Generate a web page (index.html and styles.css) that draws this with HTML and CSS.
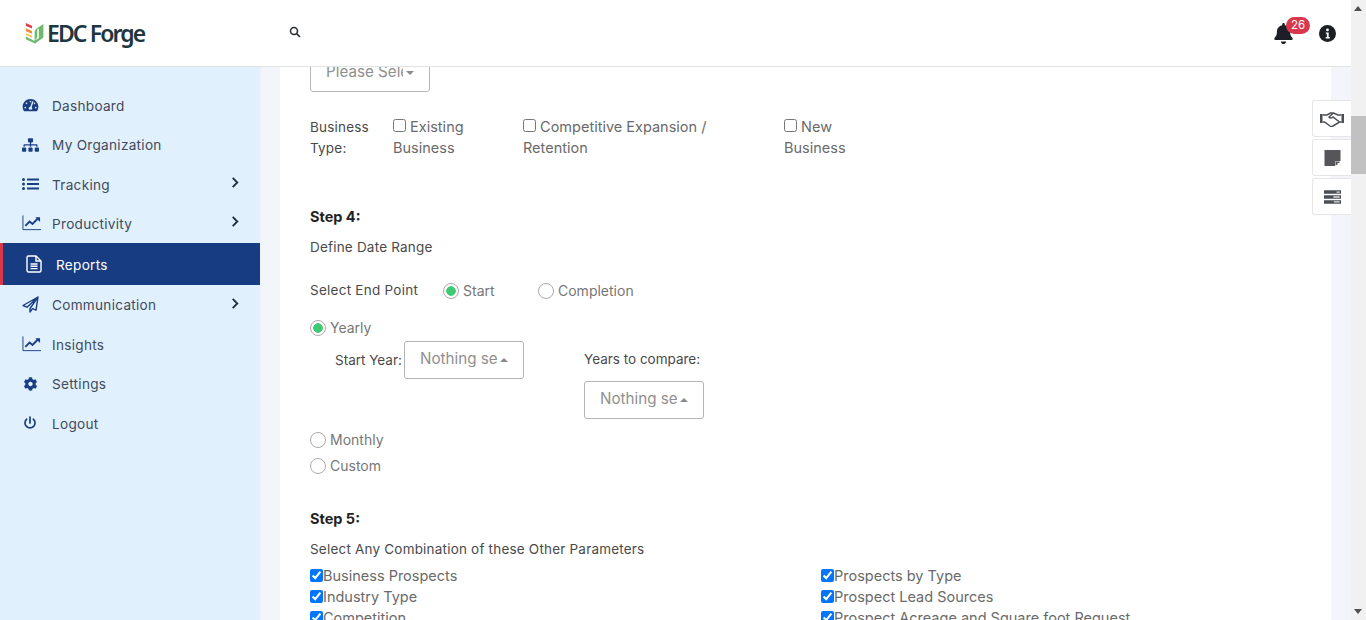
FILE: index.html
```html
<!DOCTYPE html>
<html lang="en">
<head>
<meta charset="utf-8">
<title>EDC Forge</title>
<link rel="stylesheet" href="styles.css">
</head>
<body>
<div class="app">
  <div class="page">
    <header class="topbar">
      <a class="logo">
        <svg class="logo-mark" viewBox="0 0 24 26"><path fill="#d9434e" d="M1 1l7 3v3.400L1 4.400z"/><path fill="#ef8a3c" d="M1 7l7 3v3.400l-7-3z"/><path fill="#f4c23f" d="M1 12.600l7 3v2.200l-7-3z"/><path fill="#6cb86d" d="M1 16.500l10 5V14c0-3 0-5 2-6.500L21 2v15.500l-9.500 7L1 19.500z"/><path fill="#fff" d="M14 8.500l1.800-1.200V18l-3 2.200-1.300-.7c1.600-.6 2.500-1.600 2.500-3.500z"/></svg>
        <span class="logo-text">EDC Forge</span>
      </a>
      <svg class="search-icon" viewBox="0 0 12 12"><circle cx="5" cy="5" r="3.500"/><path d="M7.600 7.600L11 11"/></svg>
      <div class="top-actions">
        <span class="bell">
          <svg class="bell-icon" viewBox="0 0 448 512"><path d="M224 512c35.320 0 63.970-28.650 63.970-64H160.030c0 35.350 28.650 64 63.970 64zm215.390-149.710c-19.320-20.760-55.470-51.990-55.470-154.290 0-77.700-54.480-139.900-127.940-155.160V32c0-17.670-14.320-32-31.980-32s-31.980 14.330-31.980 32v20.840C118.560 68.100 64.080 130.300 64.080 208c0 102.300-36.150 133.530-55.470 154.290-6 6.450-8.660 14.160-8.610 21.710.11 16.400 12.980 32 32.100 32h383.800c19.120 0 32-15.600 32.100-32 .05-7.550-2.610-15.270-8.610-21.710z"/></svg>
          <span class="badge">26</span>
        </span>
        <svg class="info-icon" viewBox="0 0 16 16"><circle cx="8" cy="8" r="8" fill="#1c2026"/><circle cx="8" cy="4.600" r="1.300" fill="#fff"/><path fill="#fff" d="M6.400 7h2.700v4.400h1V12.600H6.300V11.400h1.100V8.200h-1z"/></svg>
      </div>
    </header>

    <div class="workspace">
      <nav class="sidebar">
        <a class="nav-item">
          <svg class="nav-icon" viewBox="0 0 576 512"><path d="M288 32C128.940 32 0 160.940 0 320c0 52.800 14.250 102.260 39.060 144.800 5.610 9.620 16.300 15.200 27.440 15.200h443c11.140 0 21.830-5.580 27.440-15.200C561.750 422.260 576 372.800 576 320c0-159.060-128.940-288-288-288zm0 64c14.710 0 26.580 10.130 30.320 23.650-1.110 2.260-2.640 4.230-3.450 6.670l-9.220 27.670c-5.130 3.490-10.970 6.010-17.640 6.010-17.670 0-32-14.330-32-32S270.330 96 288 96zM96 384c-17.670 0-32-14.330-32-32s14.330-32 32-32 32 14.330 32 32-14.330 32-32 32zm48-160c-17.670 0-32-14.330-32-32s14.330-32 32-32 32 14.330 32 32-14.330 32-32 32zm246.770-72.410l-61.330 184C343.130 347.330 352 364.540 352 384c0 11.720-3.380 22.550-8.880 32H232.880c-5.500-9.450-8.880-20.280-8.880-32 0-33.940 26.500-61.430 59.900-63.590l61.340-184.010c4.170-12.560 17.730-19.450 30.360-15.170 12.570 4.190 19.350 17.790 15.170 30.360zm14.660 57.200l15.520-46.550c3.470-1.290 7.130-2.230 11.050-2.230 17.670 0 32 14.330 32 32s-14.330 32-32 32c-11.380-.01-20.890-6.280-26.570-15.220zM480 384c-17.670 0-32-14.330-32-32s14.330-32 32-32 32 14.330 32 32-14.330 32-32 32z"/></svg>
          <span>Dashboard</span>
        </a>
        <a class="nav-item">
          <svg class="nav-icon" viewBox="0 0 640 512"><path d="M128 352H32c-17.670 0-32 14.330-32 32v96c0 17.670 14.330 32 32 32h96c17.670 0 32-14.330 32-32v-96c0-17.670-14.330-32-32-32zm-24-80h192v48h48v-48h192v48h48v-57.590c0-21.170-17.230-38.410-38.410-38.410H344v-64h40c17.670 0 32-14.330 32-32V32c0-17.670-14.330-32-32-32H256c-17.670 0-32 14.330-32 32v96c0 17.670 14.330 32 32 32h40v64H94.410C73.230 224 56 241.230 56 262.410V320h48v-48zm264 80h-96c-17.670 0-32 14.330-32 32v96c0 17.670 14.330 32 32 32h96c17.670 0 32-14.330 32-32v-96c0-17.670-14.330-32-32-32zm240 0h-96c-17.670 0-32 14.330-32 32v96c0 17.670 14.330 32 32 32h96c17.670 0 32-14.330 32-32v-96c0-17.670-14.330-32-32-32z"/></svg>
          <span>My Organization</span>
        </a>
        <a class="nav-item">
          <svg class="nav-icon" viewBox="0 0 17 13"><circle cx="1.500" cy="2" r="1.500"/><circle cx="1.500" cy="6.500" r="1.500"/><circle cx="1.500" cy="11" r="1.500"/><path d="M5 1h12v2H5zM5 5.500h12v2H5zM5 10h12v2H5z"/></svg>
          <span>Tracking</span>
          <svg class="chevron" viewBox="0 0 8 12"><path d="M1.500 1l5 5-5 5"/></svg>
        </a>
        <a class="nav-item">
          <svg class="nav-icon line-icon" viewBox="0 0 20 16"><path d="M1 0v15h19"/><path class="thick" d="M3.500 11l4.500-4.500 3 2.500 6-6"/><path class="solid" d="M14 2h5v5z"/></svg>
          <span>Productivity</span>
          <svg class="chevron" viewBox="0 0 8 12"><path d="M1.500 1l5 5-5 5"/></svg>
        </a>
        <a class="nav-item active">
          <svg class="nav-icon file-icon" viewBox="0 0 16 18"><path d="M1 2.500A1.500 1.500 0 0 1 2.500 1H10l5 5v9.500a1.500 1.500 0 0 1-1.500 1.500h-11A1.500 1.500 0 0 1 1 15.500z"/><path d="M10 1v5h5M4.500 9h7M4.500 11.300h7M4.500 13.600h7"/></svg>
          <span>Reports</span>
        </a>
        <a class="nav-item">
          <svg class="nav-icon plane-icon" viewBox="0 0 17 17"><path d="M16 1L1 9.500l4 1.700L16 1l-8 11.500V16l2.500-3.300 3.500 1.500z"/></svg>
          <span>Communication</span>
          <svg class="chevron" viewBox="0 0 8 12"><path d="M1.500 1l5 5-5 5"/></svg>
        </a>
        <a class="nav-item">
          <svg class="nav-icon line-icon" viewBox="0 0 20 16"><path d="M1 0v15h19"/><path class="thick" d="M3.500 11l4.500-4.500 3 2.500 6-6"/><path class="solid" d="M14 2h5v5z"/></svg>
          <span>Insights</span>
        </a>
        <a class="nav-item">
          <svg class="nav-icon" viewBox="0 0 512 512"><path d="M487.400 315.700l-42.600-24.600c4.300-23.200 4.300-47 0-70.200l42.600-24.600c4.900-2.800 7.100-8.600 5.500-14-11.100-35.600-30-67.800-54.700-94.600-3.800-4.100-10-5.100-14.800-2.300L380.800 110c-17.900-15.400-38.500-27.300-60.800-35.100V25.800c0-5.600-3.900-10.500-9.400-11.700-36.700-8.200-74.300-7.800-109.200 0-5.500 1.200-9.400 6.100-9.400 11.700V75c-22.200 7.900-42.800 19.800-60.800 35.100L88.700 85.500c-4.900-2.800-11-1.900-14.800 2.300-24.700 26.700-43.600 58.900-54.700 94.600-1.700 5.400.6 11.200 5.500 14L67.300 221c-4.300 23.200-4.300 47 0 70.200l-42.600 24.600c-4.900 2.800-7.100 8.600-5.500 14 11.100 35.600 30 67.800 54.700 94.600 3.800 4.100 10 5.100 14.800 2.300l42.600-24.600c17.900 15.400 38.500 27.300 60.800 35.100v49.200c0 5.600 3.900 10.500 9.400 11.700 36.700 8.200 74.300 7.800 109.200 0 5.500-1.200 9.400-6.100 9.400-11.700v-49.200c22.200-7.900 42.800-19.800 60.800-35.100l42.600 24.600c4.900 2.800 11 1.900 14.800-2.300 24.700-26.700 43.600-58.900 54.700-94.600 1.500-5.500-.7-11.300-5.600-14.100zM256 336c-44.100 0-80-35.900-80-80s35.900-80 80-80 80 35.900 80 80-35.900 80-80 80z"/></svg>
          <span>Settings</span>
        </a>
        <a class="nav-item">
          <svg class="nav-icon power-icon" viewBox="0 0 14 14"><path d="M7 1v6M3.700 3.200a5 5 0 1 0 6.600 0"/></svg>
          <span>Logout</span>
        </a>
      </nav>

      <main class="panel">
        <div class="panel-inner">
          <button class="picker picker-top"><span class="picker-text">Please Select</span><i class="caret"></i></button>

          <div class="business-row">
            <div class="business-label">Business Type:</div>
            <label class="business-col col-a"><input type="checkbox"> Existing Business</label>
            <label class="business-col col-b"><input type="checkbox"> Competitive Expansion / Retention</label>
            <label class="business-col col-c"><input type="checkbox"> New Business</label>
          </div>

          <h3 class="step step-four">Step 4:</h3>
          <p class="lead lead-four">Define Date Range</p>

          <div class="endpoint-row">
            <span class="endpoint-label">Select End Point</span>
            <label class="radio-line endpoint-start"><input class="radio" type="radio" name="end" checked> Start</label>
            <label class="radio-line endpoint-finish"><input class="radio" type="radio" name="end"> Completion</label>
          </div>

          <label class="radio-line period period-yearly"><input class="radio" type="radio" name="period" checked> Yearly</label>
          <div class="year-row">
            <div class="start-year">
              <span class="year-label">Start Year:</span>
              <button class="picker"><span class="picker-text">Nothing selected</span><i class="caret up"></i></button>
            </div>
            <div class="compare-year">
              <span class="year-label">Years to compare:</span>
              <button class="picker"><span class="picker-text">Nothing selected</span><i class="caret up"></i></button>
            </div>
          </div>
          <label class="radio-line period period-monthly"><input class="radio" type="radio" name="period"> Monthly</label>
          <label class="radio-line period period-custom"><input class="radio" type="radio" name="period"> Custom</label>

          <h3 class="step step-five">Step 5:</h3>
          <p class="lead lead-five">Select Any Combination of these Other Parameters</p>

          <div class="param-grid">
            <label class="param"><input type="checkbox" checked>Business Prospects</label>
            <label class="param"><input type="checkbox" checked>Prospects by Type</label>
            <label class="param"><input type="checkbox" checked>Industry Type</label>
            <label class="param"><input type="checkbox" checked>Prospect Lead Sources</label>
            <label class="param"><input type="checkbox" checked>Competition</label>
            <label class="param"><input type="checkbox" checked>Prospect Acreage and Square foot Request</label>
          </div>
        </div>
      </main>
      <div class="gutter"></div>
    </div>

    <aside class="dock">
      <a class="dock-btn">
        <svg class="dock-icon shake" viewBox="0 0 24 16"><path class="solid" d="M0 3h2.500v9H0zM21.500 3H24v9h-2.500z"/><path d="M2.500 4H7l3.500-2h3L18 4h3.500M21.500 11h-2L13 15q-1.500 1-3 0l-5.500-4h-2M13.500 2L9 6q1.500 2 4 0l6.500 5"/></svg>
      </a>
      <a class="dock-btn">
        <svg class="dock-icon" viewBox="0 0 16 16"><path fill="#55555a" d="M0 0h16v10.500L10.500 16H0z"/><path fill="#fff" d="M11 11h5v5h-5z"/><path fill="#55555a" d="M11.500 11.500H15V13h-2v2h-1.500z"/></svg>
      </a>
      <a class="dock-btn">
        <svg class="dock-icon" viewBox="0 0 19 15"><path fill="#4a4f55" d="M0 0h19v4H0zM0 5.500h19v4H0zM0 11h19v4H0z"/><path fill="#dfe1e3" d="M14 1.300h3.500v1.400H14zM10.500 6.800h7v1.400h-7zM11 12.300h6.500v1.400H11z"/></svg>
      </a>
    </aside>
  </div>

  <div class="scrollbar">
    <i class="scroll-arrow"></i>
    <div class="scroll-track"><div class="scroll-thumb"></div></div>
    <i class="scroll-arrow down"></i>
  </div>
</div>
</body>
</html>
```
FILE: styles.css
```css
* { box-sizing: border-box; }
html, body { margin: 0; height: 620px; overflow: hidden; }
body { font-family: "Inter", "Liberation Sans", sans-serif; font-size: 13.5px; color: #4a4a4a; background: #fff; }
svg { display: block; flex: none; }

.app { display: flex; width: 1366px; height: 620px; }
.page { position: relative; flex: 1; display: flex; flex-direction: column; min-width: 0; }

.topbar { height: 67px; flex: none; display: flex; align-items: center; background: #fff; border-bottom: 1px solid #dfe3e6; padding: 0 15px 0 25px; position: relative; z-index: 2; }
.logo { display: flex; align-items: center; gap: 1px; width: 264px; }
.logo-mark { width: 21px; height: 25px; }
.logo-text { font-family: "Noto Sans", "Liberation Sans", sans-serif; font-weight: 600; font-size: 23px; letter-spacing: -1.9px; color: #20363f; line-height: 1; }
.search-icon { width: 12px; height: 12px; fill: none; stroke: #2b2f36; stroke-width: 1.600; margin-top: -2px; }
.top-actions { margin-left: auto; display: flex; align-items: center; gap: 26px; }
.bell { position: relative; display: block; }
.bell-icon { width: 19px; height: 21px; fill: #1c2026; }
.badge { position: absolute; left: 12px; top: -6px; width: 24px; height: 17px; border-radius: 9px; background: #d9374b; color: #fff; font-size: 11.500px; line-height: 17px; text-align: center; }
.info-icon { width: 17px; height: 17px; }

.workspace { flex: 1; display: flex; min-height: 0; background: #f3f5fa; }
.sidebar { width: 262px; flex: none; background: #e1f0fd; padding-top: 18.600px; margin-right: 18px; border-right: 2px solid #ebf3fc; }
.nav-item { display: flex; align-items: center; height: 39.400px; padding: 0 21px 0 22px; color: #3f4b5c; font-size: 13.600px; letter-spacing: 0.28px; }
.nav-item span { margin-top: 1px; }
.nav-icon { width: 17px; height: 14px; fill: #1a3e82; margin-right: 13px; }
.chevron { width: 8px; height: 11px; margin-left: auto; margin-top: -3px; fill: none; stroke: #1f2d3d; stroke-width: 2; }
.line-icon { width: 19px; height: 16px; margin-right: 11px; fill: none; stroke: #1a3e82; stroke-width: 1; }
.line-icon .thick { stroke-width: 2; }
.line-icon .solid { fill: #1a3e82; stroke: none; }
.plane-icon { width: 17px; height: 17px; fill: none; stroke: #1a3e82; stroke-width: 1.400; stroke-linejoin: round; }
.power-icon { width: 14px; height: 14px; margin: 0 15px 0 1px; fill: none; stroke: #1a3e82; stroke-width: 1.700; stroke-linecap: round; }
.active { height: 42px; background: #173c82; color: #fff; border-left: 3px solid #d9374b; padding-left: 23px; }
.file-icon { width: 16px; height: 18px; margin-right: 14px; fill: none; stroke: #fff; stroke-width: 1.400; }

.panel { width: 1051px; flex: none; background: #fff; overflow: hidden; padding: 0 30px; }
.panel-inner { margin-top: -13px; }
.gutter { flex: 1; }

.picker { display: flex; align-items: center; width: 120px; height: 38px; padding: 0 10px 0 15px; background: #fff; border: 1px solid #b5b5b5; border-radius: 3px; font: inherit; font-size: 15.200px; color: #8f8f8f; margin: 0; }
.picker-text { flex: 1; overflow: hidden; white-space: nowrap; text-align: left; margin-top: -4px; }
.caret { width: 0; height: 0; margin: 0 5px 0 3px; border-left: 4px solid transparent; border-right: 4px solid transparent; border-top: 4px solid #8a8a8a; }
.caret.up { border-top: 0; border-bottom: 4px solid #8a8a8a; }

.business-row { display: flex; margin-top: 24px; line-height: 21px; color: #6a6a6a; font-size: 14.500px; }
.business-label { width: 83px; padding: 1px 20px 0 0; color: #4a4a4a; font-size: 13.500px; letter-spacing: .2px; }
.business-col { display: block; }
.col-a { width: 130px; padding-right: 50px; }
.col-b { width: 261px; padding-right: 60px; }
.col-c { width: 100px; padding-right: 20px; }
.business-col input { margin: 0; width: 13px; height: 13px; vertical-align: 0; }

.step { margin: 0; font-size: 14.500px; font-weight: 700; color: #222; line-height: 20px; }
.lead { margin: 0; line-height: 20px; color: #4a4a4a; letter-spacing: .2px; }
.step-four { margin-top: 48px; }
.lead-four { margin-top: 10px; }

.endpoint-row { display: flex; align-items: center; margin-top: 24px; height: 20px; }
.endpoint-label { width: 133px; margin-top: -2px; letter-spacing: .25px; }
.endpoint-start { width: 95px; }
.endpoint-row .radio-line { margin-top: -2px; }

.radio-line { display: flex; align-items: center; gap: 4px; color: #777; height: 20px; font-size: 14px; }
.radio { appearance: none; width: 16px; height: 16px; margin: 2px 0 0; border: 1px solid #aaa; border-radius: 50%; background: #fff; display: block; }
.radio:checked { background: radial-gradient(circle, #3ecb74 0 4.500px, #fff 5px); }
.period-yearly { margin-top: 16px; }
.period-monthly { margin-top: 10px; }
.period-custom { margin-top: 6px; }

.year-row { display: flex; align-items: flex-start; margin-top: 4px; padding-left: 25px; height: 78px; }
.start-year { display: flex; align-items: center; gap: 3px; width: 249px; }
.start-year .year-label { margin-top: -1px; width: 66px; }
.compare-year { display: flex; flex-wrap: wrap; gap: 12px 0; width: 120px; }
.year-label { color: #4a4a4a; white-space: nowrap; }
.compare-year .year-label { width: 100%; margin-top: 8px; line-height: 20px; }

.step-five { margin-top: 34px; }
.lead-five { margin-top: 10px; }

.param-grid { display: grid; grid-template-columns: 511px 1fr; grid-auto-rows: 21px; margin-top: 6px; }
.param { display: flex; align-items: center; color: #6a6a6a; white-space: nowrap; font-size: 14.500px; }
.param input { margin: 0; width: 13px; height: 13px; flex: none; }

.dock { position: absolute; left: 1312px; top: 100px; display: flex; flex-direction: column; gap: 2px; z-index: 3; }
.dock-btn { width: 39px; height: 37px; background: #fff; border: 1px solid #e6e6e6; border-right: 0; border-radius: 3px 0 0 3px; display: flex; align-items: center; justify-content: center; }
.dock-icon { width: 17px; height: 16px; }
.shake { width: 24px; height: 16px; fill: none; stroke: #4a4f55; stroke-width: 1.500; }
.shake .solid { fill: #4a4f55; stroke: none; }

.scrollbar { width: 15px; flex: none; background: #f1f1f1; display: flex; flex-direction: column; align-items: stretch; }
.scroll-arrow { height: 17px; flex: none; position: relative; }
.scroll-arrow::after { content: ""; position: absolute; left: 3px; top: 6px; border-left: 4px solid transparent; border-right: 4px solid transparent; border-bottom: 5px solid #505050; }
.scroll-arrow.down::after { border-bottom: 0; border-top: 5px solid #505050; }
.scroll-track { flex: 1; padding-top: 99px; }
.scroll-thumb { height: 58px; background: #c1c1c1; }
```
